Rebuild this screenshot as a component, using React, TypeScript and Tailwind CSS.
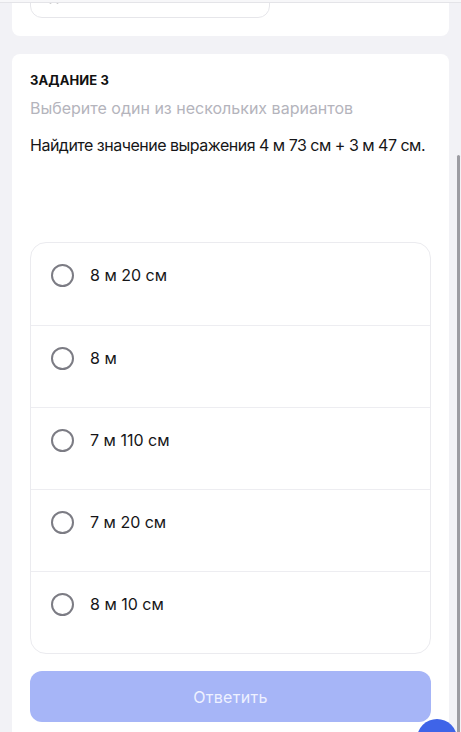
import React from "react"

const options = ["8 м 20 см", "8 м", "7 м 110 см", "7 м 20 см", "8 м 10 см"]

const Radio: React.FC = () => (
  <span className="w-[23px] h-[23px] rounded-full border-[2.5px] border-[#7c7c84] shrink-0" />
)

const App: React.FC = () => {
  return (
    <div
      className="relative h-[732px] w-[461px] overflow-hidden bg-[#f2f2f6]"
      style={{ fontFamily: "Inter, 'Noto Sans', sans-serif" }}
    >
      {/* header edge */}
      <div className="absolute left-0 top-0 w-full h-[3px] bg-[#f7f7f9] border-b border-[#e4e4e8] z-10" />

      {/* previous task card, cut off at the top */}
      <div className="mx-3 w-[437px] h-[36px] bg-white rounded-b-lg overflow-hidden">
        <div className="ml-[18px] w-[240px] h-[40px] -mt-[22px] border border-[#e6e6ea] rounded-xl flex items-start pt-[20px] pl-[16px]">
          {/* bottoms of an icon and a label scrolled out of view */}
          <svg width="14" height="6" viewBox="0 0 14 6">
            <circle cx="3.5" cy="1" r="2.5" fill="none" stroke="#222" strokeWidth="1.6" />
            <circle cx="10.5" cy="1" r="2.5" fill="none" stroke="#222" strokeWidth="1.6" />
          </svg>
          <span className="ml-[50px] mt-[2px] w-[2px] h-[2px] bg-[#444]" />
          <span className="ml-[91px] w-[2px] h-[3px] bg-[#444]" />
          <span className="ml-[3px] w-[2px] h-[3px] bg-[#444]" />
        </div>
      </div>

      {/* current task card */}
      <div className="mx-3 mt-[18px] w-[437px] bg-white rounded-t-lg px-[18px] pt-[18px] pb-10 flex flex-col">
        <div className="text-[13px] font-bold text-[#111] leading-[16px] tracking-[0.1px]">ЗАДАНИЕ 3</div>
        <div className="mt-[9px] text-[16px] text-[#b4b4bc] leading-[22px]">
          Выберите один из нескольких вариантов
        </div>
        <div className="mt-[15px] text-[16px] text-[#161618] leading-[22px] tracking-[-0.5px] whitespace-nowrap">
          Найдите значение выражения 4 м 73 см + 3 м 47 см.
        </div>

        <div className="mt-[86px] border border-[#ebebef] rounded-2xl overflow-hidden flex flex-col">
          {options.map((o, i) => (
            <div
              key={o}
              className={
                "h-[82px] flex items-start gap-[16px] pl-[20px] pt-[21px] " +
                (i > 0 ? "border-t border-[#ededf1]" : "")
              }
            >
              <Radio />
              <span className="text-[16px] text-[#161618] leading-[23px]">{o}</span>
            </div>
          ))}
        </div>

        <button className="mt-[17px] w-full h-[51px] rounded-xl bg-[#a6b5f7] text-[16px] text-[#eef1ff] tracking-[0.3px]">
          Ответить
        </button>
      </div>

      {/* scrollbar */}
      <div className="absolute right-[1px] top-[155px] w-[3px] h-[600px] bg-[#9c9ca2] rounded-sm" />

      {/* floating button */}
      <div className="absolute left-[417px] top-[719px] w-[40px] h-[40px] rounded-full bg-[#3f64e8]" />
    </div>
  )
}

export default App
